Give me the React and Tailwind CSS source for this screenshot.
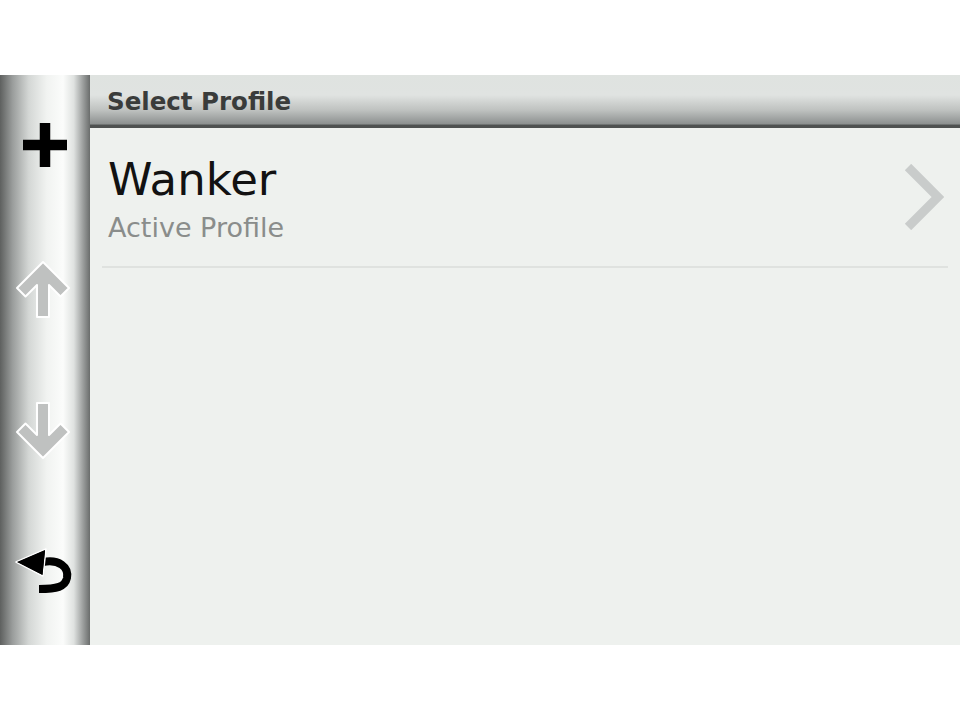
export default function App() {
  return (
    <div className="h-[720px] w-[960px] bg-white pt-[75px] font-['DejaVu_Sans',sans-serif]">
      <div className="flex h-[570px]">
        {/* left button rail */}
        <div className="flex w-[90px] flex-col bg-[linear-gradient(to_right,#5e605f_0%,#9a9d9c_14%,#d4d7d5_32%,#f1f3f1_52%,#fbfcfb_70%,#dfe2e0_82%,#9da09f_92%,#6a6d6c_100%)]">
          <div className="flex flex-1 items-center justify-center pb-[4px]">
            <svg width="46" height="46" viewBox="0 0 46 46">
              <path d="M23 1 V45 M1 23 H45" stroke="#000" strokeWidth="10.5" />
            </svg>
          </div>
          <div className="flex flex-1 items-center justify-center pr-[4px]">
            <svg width="56" height="59" viewBox="0 0 56 59">
              <path
                d="M28 2 L54 28 L45.5 36.5 L34 25 L34 57 L22 57 L22 25 L10.5 36.5 L2 28 Z"
                fill="#bfc1c0"
                stroke="#fff"
                strokeWidth="2"
                strokeLinejoin="round"
              />
            </svg>
          </div>
          <div className="flex flex-1 items-center justify-center pr-[4px]">
            <svg width="56" height="59" viewBox="0 0 56 59">
              <path
                d="M28 57 L54 31 L45.5 22.5 L34 34 L34 2 L22 2 L22 34 L10.5 22.5 L2 31 Z"
                fill="#bfc1c0"
                stroke="#fff"
                strokeWidth="2"
                strokeLinejoin="round"
              />
            </svg>
          </div>
          <div className="flex flex-1 items-center justify-center pb-[4px] pr-[2px]">
            <svg width="62" height="52" viewBox="0 0 62 52">
              <path d="M30 17 C 46 14, 56 22, 54 33 C 52 42, 44 44, 26 44" fill="none" stroke="#000" strokeWidth="8" />
              <path d="M3 17 L33 4 L30 31 Z" fill="#000" stroke="#fff" strokeWidth="1.5" strokeLinejoin="round" />
              <path d="M4 17 L32 5 L29.5 30 Z" fill="#000" />
            </svg>
          </div>
        </div>

        {/* main panel */}
        <div className="flex flex-1 flex-col bg-[#eef1ee]">
          <div className="h-[53px] bg-[linear-gradient(to_bottom,#dfe3e0_0%,#e0e3e1_38%,#bfc2c0_66%,#8d9190_92%,#4e5150_95%,#4e5150_100%)] pl-[17px] pt-[15px]">
            <div className="text-[24.5px] font-bold leading-none text-[#3a3c3b]">Select Profile</div>
          </div>

          <div className="relative mx-[12px] border-b-2 border-[#dfe2df] pb-[25px] pl-[6px] pt-[29px]">
            <div className="text-[45px] leading-none text-[#121212]">Wanker</div>
            <div className="mt-[12px] text-[27px] leading-none text-[#8a8d8b]">Active Profile</div>
            <svg className="absolute right-[4px] top-[36px]" width="40" height="66" viewBox="0 0 40 66">
              <path d="M4 3 L34 33 L4 63" fill="none" stroke="#c9cccb" strokeWidth="9" />
            </svg>
          </div>
        </div>
      </div>
    </div>
  )
}
